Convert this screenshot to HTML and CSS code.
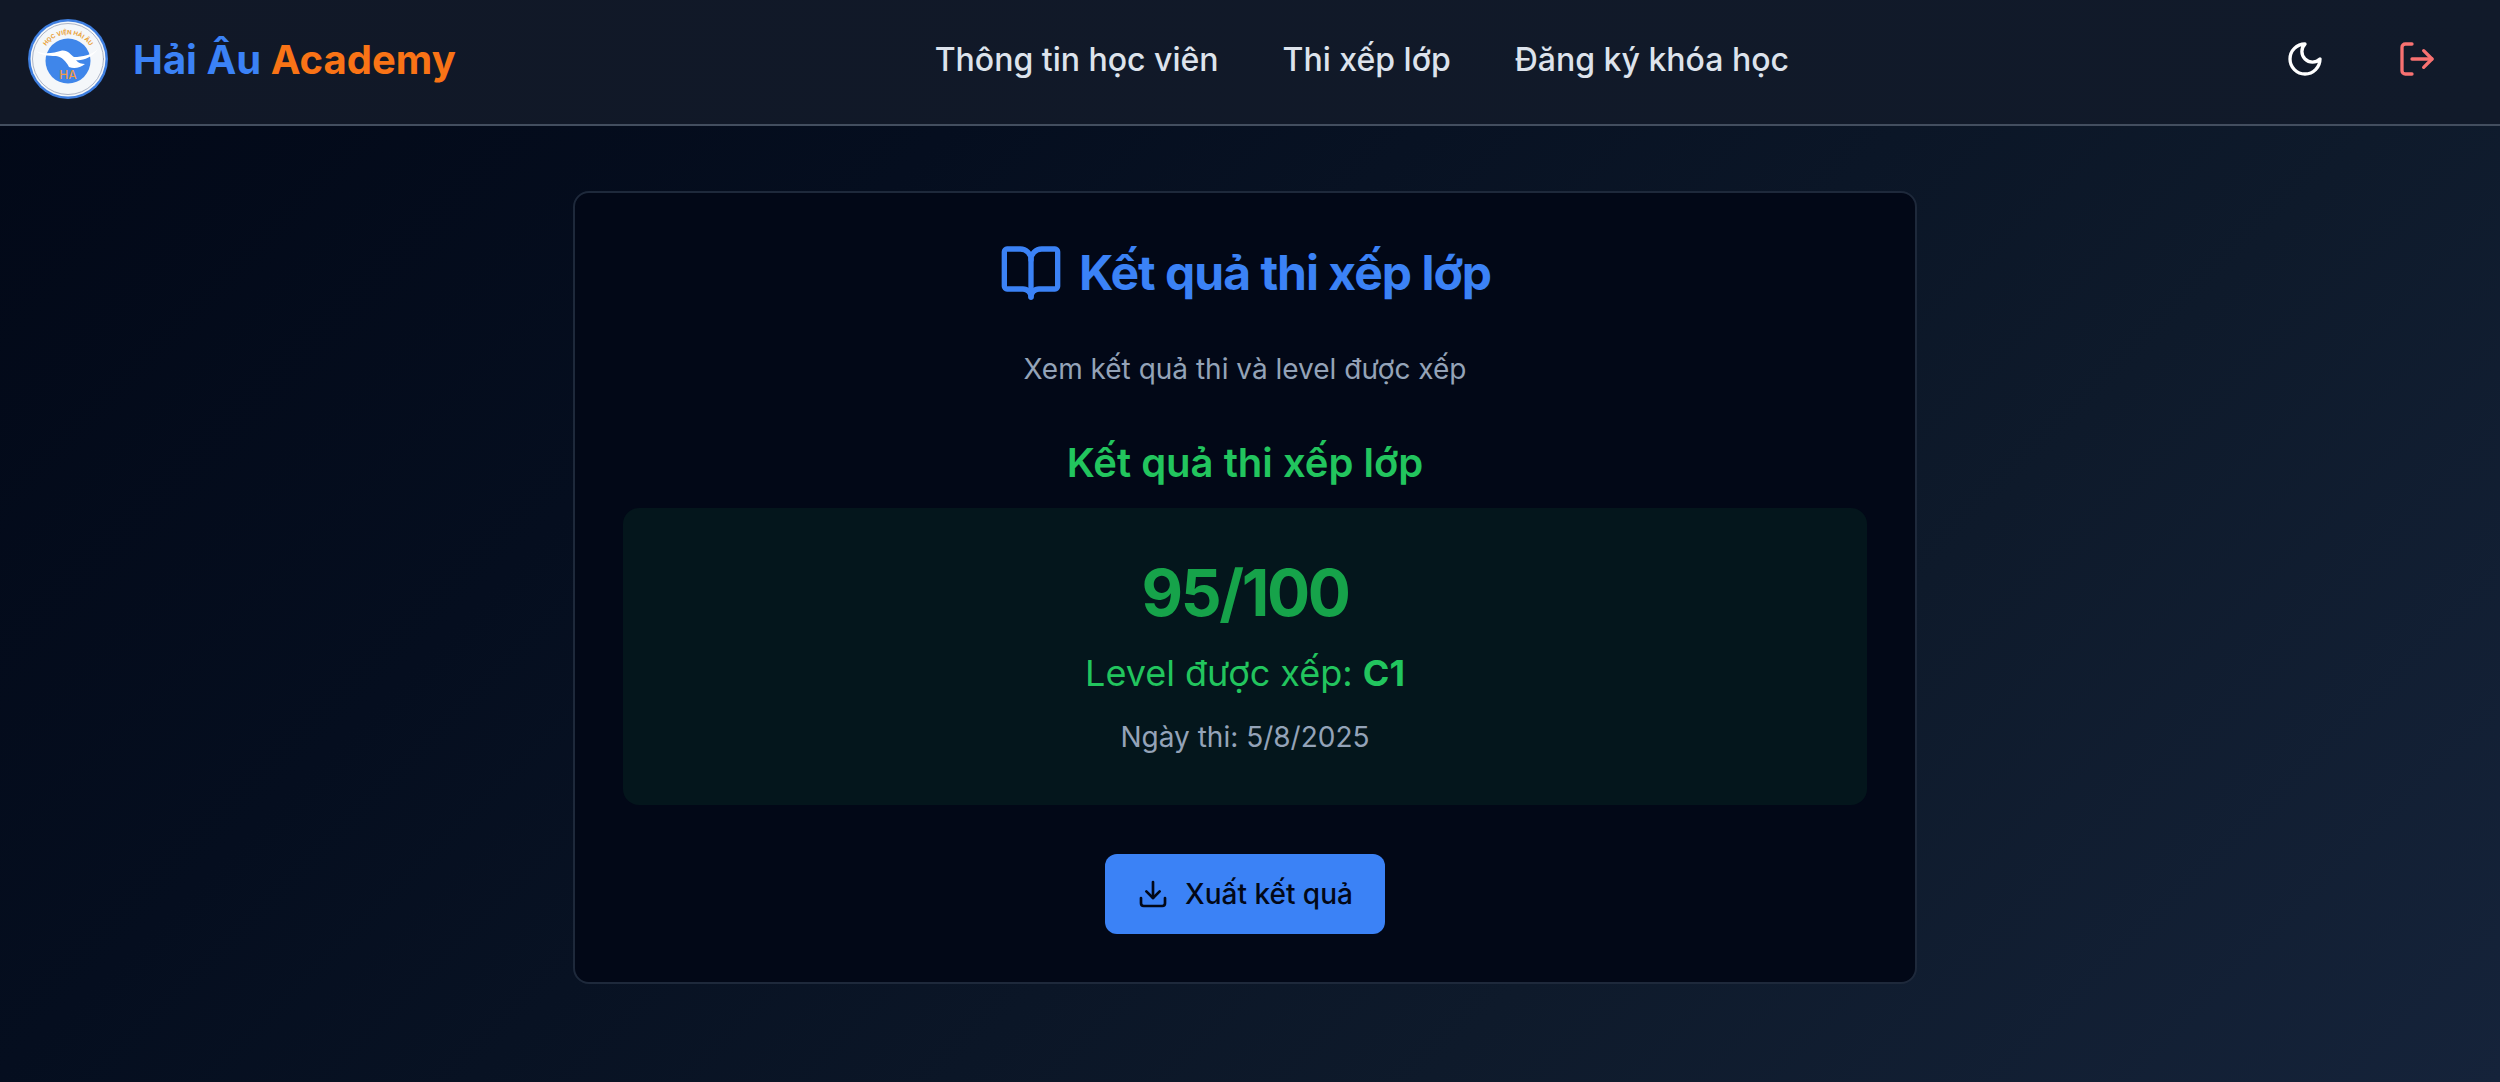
FILE: index.html
```html
<!DOCTYPE html>
<html>
<head>
  <meta charset="utf-8">
  <title>Kết quả thi xếp lớp</title>
  <link rel="stylesheet" href="styles.css">
</head>
<body>
  <header class="topbar">
    <a class="brand">
      <svg class="brand-logo" viewBox="0 0 80 80">
        <circle cx="40" cy="40" r="40" fill="#3f7fe0"/>
        <circle cx="40" cy="40" r="37.500" fill="#f4f7fa"/>
        <circle cx="40" cy="40" r="35.500" fill="none" stroke="#8d97ad" stroke-width="0.7"/>
        <circle cx="40" cy="42" r="22.500" fill="#3f86ea"/>
        <path d="M8 32C16 36 26 34 34 31.500 40 31 43 36 46 38 54 38 64 36 70 30 64 39 54 42 48 41 50 44 54 45 57 45 52 49 46 50 41 48 38 42 34 38 28 37 20 37 12 36 8 32Z" fill="#fff"/>
        <text class="logo-ha" x="40" y="60" text-anchor="middle">HA</text>
        <path id="logo-arc" d="M15 33A26.500 26.500 0 0 1 65 33" fill="none"/>
        <text class="logo-arc-text"><textPath href="#logo-arc" startOffset="50%" text-anchor="middle">HỌC VIỆN HẢI ÂU</textPath></text>
      </svg>
      <span class="brand-name"><span class="brand-blue">Hải Âu</span> <span class="brand-orange">Academy</span></span>
    </a>
    <nav class="nav">
      <a>Thông tin học viên</a>
      <a>Thi xếp lớp</a>
      <a>Đăng ký khóa học</a>
    </nav>
    <div class="actions">
      <button class="icon-btn">
        <svg class="icon" viewBox="0 0 24 24" stroke="#fff"><path d="M12 3a6 6 0 0 0 9 9 9 9 0 1 1-9-9Z"/></svg>
      </button>
      <button class="icon-btn">
        <svg class="icon" viewBox="0 0 24 24" stroke="#f87171"><path d="M9 21H5a2 2 0 0 1-2-2V5a2 2 0 0 1 2-2h4"/><path d="m16 17 5-5-5-5"/><path d="M21 12H9"/></svg>
      </button>
    </div>
  </header>

  <main class="page">
    <section class="card">
      <h1 class="card-title">
        <svg class="title-icon" viewBox="0 0 24 24" stroke="#3b82f6"><path d="M12 7v14"/><path d="M3 18a1 1 0 0 1-1-1V4a1 1 0 0 1 1-1h5a4 4 0 0 1 4 4 4 4 0 0 1 4-4h5a1 1 0 0 1 1 1v13a1 1 0 0 1-1 1h-6a3 3 0 0 0-3 3 3 3 0 0 0-3-3z"/></svg>
        Kết quả thi xếp lớp
      </h1>
      <p class="card-sub">Xem kết quả thi và level được xếp</p>
      <h2 class="result-title">Kết quả thi xếp lớp</h2>
      <div class="result-box">
        <div class="score">95/100</div>
        <div class="level">Level được xếp: <strong>C1</strong></div>
        <div class="exam-date">Ngày thi: 5/8/2025</div>
      </div>
      <div class="export-row">
        <button class="export-btn">
          <svg class="export-icon" viewBox="0 0 24 24" stroke="#020817"><path d="M12 15V3"/><path d="M21 15v4a2 2 0 0 1-2 2H5a2 2 0 0 1-2-2v-4"/><path d="m7 10 5 5 5-5"/></svg>
          Xuất kết quả
        </button>
      </div>
    </section>
  </main>
</body>
</html>
```

FILE: styles.css
```css
* {
  box-sizing: border-box;
}

body {
  margin: 0;
  height: 1082px;
  overflow: hidden;
  font-family: Inter, "Noto Sans", sans-serif;
  background: linear-gradient(135deg, #020817 0%, #050e1f 30%, #0e1a2b 70%, #15233a 100%);
  color: #e2e8f0;
}

svg {
  fill: none;
  stroke-width: 2;
  stroke-linecap: round;
  stroke-linejoin: round;
}

.topbar {
  height: 126px;
  display: flex;
  justify-content: space-between;
  align-items: center;
  padding: 0 28px 6px;
  background: linear-gradient(90deg, #111827, #111a2a);
  border-bottom: 2px solid #434e5f;
}

.brand {
  display: flex;
  align-items: center;
  gap: 25px;
}

.brand-logo {
  width: 80px;
  height: 80px;
  stroke-width: 0;
}

.logo-ha {
  font-size: 12px;
  font-weight: 500;
  fill: #ef9a4a;
}

.logo-arc-text {
  font-size: 6px;
  font-weight: 700;
  fill: #e9a23b;
}

.brand-name {
  font-size: 40px;
  font-weight: 700;
}

.brand-blue {
  color: #3b82f6;
}

.brand-orange {
  color: #f97316;
}

.nav {
  display: flex;
  gap: 64px;
  margin-right: 13px;
  font-size: 32px;
  font-weight: 500;
  color: #dde3ec;
}

.actions {
  display: flex;
  justify-content: flex-end;
  gap: 64px;
  padding-right: 31px;
}

.icon-btn {
  width: 48px;
  height: 48px;
  padding: 4px;
  border: 0;
  background: none;
  display: flex;
  align-items: center;
  justify-content: center;
}

.icon {
  width: 40px;
  height: 40px;
}

.page {
  padding: 65px 10px 0 0;
  display: flex;
  justify-content: center;
}

.card {
  width: 1344px;
  height: 793px;
  padding: 48px;
  background: #020817;
  border: 2px solid #1e293b;
  border-radius: 16px;
}

.card-title {
  margin: 0;
  display: flex;
  justify-content: center;
  align-items: center;
  gap: 16px;
  font-size: 48px;
  font-weight: 700;
  line-height: 64px;
  letter-spacing: -1px;
  color: #3b82f6;
}

.title-icon {
  width: 64px;
  height: 64px;
}

.card-sub {
  margin: 44px 0 0;
  text-align: center;
  font-size: 28px;
  line-height: 40px;
  color: #94a3b8;
}

.result-title {
  margin: 46px 0 0;
  text-align: center;
  font-size: 40px;
  font-weight: 600;
  line-height: 56px;
  color: #22c55e;
}

.result-box {
  margin-top: 17px;
  height: 297px;
  padding-top: 37px;
  text-align: center;
  background: #04161c;
  border-radius: 16px;
}

.score {
  font-size: 64px;
  font-weight: 700;
  line-height: 96px;
  letter-spacing: -2.4px;
  color: #16a34a;
}

.level {
  margin-top: 8px;
  font-size: 36px;
  line-height: 48px;
  color: #22c55e;
}

.level strong {
  font-weight: 700;
}

.exam-date {
  margin-top: 20px;
  font-size: 28px;
  line-height: 40px;
  color: #94a3b8;
}

.export-row {
  margin-top: 49px;
  display: flex;
  justify-content: center;
}

.export-btn {
  width: 280px;
  height: 80px;
  display: flex;
  align-items: center;
  justify-content: center;
  gap: 16px;
  border: 0;
  border-radius: 12px;
  background: #3b82f6;
  color: #020817;
  font-family: inherit;
  font-size: 28px;
  font-weight: 500;
}

.export-icon {
  width: 32px;
  height: 32px;
}
```
